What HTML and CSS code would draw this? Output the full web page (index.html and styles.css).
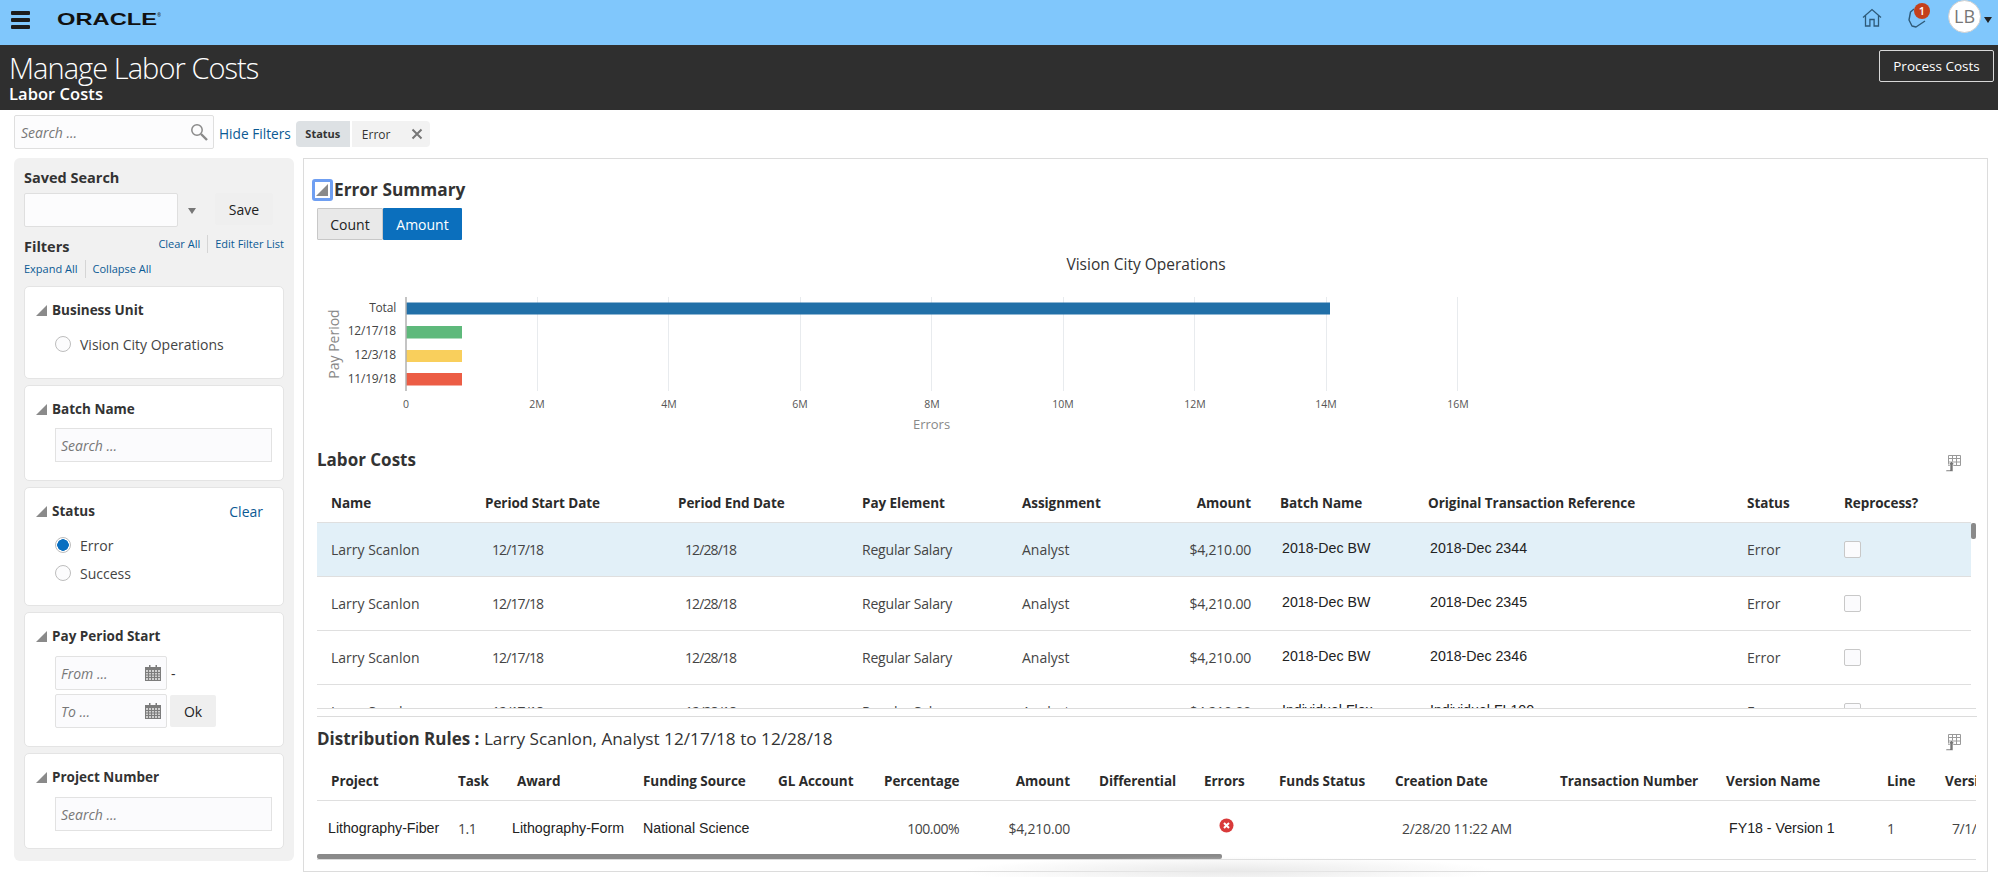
FILE: index.html
```html
<!DOCTYPE html>
<html lang="en">
<head>
<meta charset="utf-8">
<title>Manage Labor Costs</title>
<link rel="stylesheet" href="styles.css">
</head>
<body>
<header class="topbar">
  <div class="menu"><span></span><span></span><span></span></div>
  <svg class="logo" width="104" height="20" viewBox="0 0 104 20"><text x="0" y="15" textLength="100" lengthAdjust="spacingAndGlyphs" class="logo-text">ORACLE</text><text x="100" y="7" class="logo-r">®</text></svg>
  <div class="top-right">
    <svg class="home" width="20" height="19" viewBox="0 0 20 19"><path d="M1 9.500 10 1.500l9 8M3.500 7.600V18h4.400v-6.500h4.200V18h4.400V7.600" fill="none" stroke="#2e5a78" stroke-width="1.300"/></svg>
    <div class="notif">
      <svg width="22" height="24" viewBox="0 0 22 24"><path d="M8 3 4.500 6 3 14l3 6 4 1 9-6" fill="none" stroke="#2e5a78" stroke-width="1.400" stroke-linejoin="round"/></svg>
      <span class="badge">1</span>
    </div>
    <div class="avatar">LB</div>
    <span class="caret"></span>
  </div>
</header>
<section class="titlebar">
  <div>
    <h1>Manage Labor Costs</h1>
    <h2>Labor Costs</h2>
  </div>
  <button class="process">Process Costs</button>
</section>
<div class="filterbar">
  <div class="search">
    <span class="ph">Search ...</span>
    <svg width="18" height="18" viewBox="0 0 18 18"><circle cx="7" cy="7" r="5.200" fill="none" stroke="#8a8a8a" stroke-width="1.500"/><path d="M11 11l6 6" stroke="#8a8a8a" stroke-width="2.400"/></svg>
  </div>
  <a class="hide">Hide Filters</a>
  <div class="chip"><span class="chip-k">Status</span><span class="chip-v">Error<svg width="12" height="12" viewBox="0 0 12 12"><path d="M1.500 1.500l9 9m0-9l-9 9" stroke="#777" stroke-width="2"/></svg></span></div>
</div>
<main class="content">
  <aside class="side">
    <h3 class="side-h">Saved Search</h3>
    <div class="saved">
      <div class="saved-input"></div>
      <span class="drop"></span>
      <button class="btn save">Save</button>
    </div>
    <div class="filters-head">
      <h3 class="side-h">Filters</h3>
      <div class="links"><a>Clear All</a><a>Edit Filter List</a></div>
    </div>
    <div class="links links-left"><a>Expand All</a><a>Collapse All</a></div>

    <section class="card c1">
      <div class="card-h"><span class="tri"></span><h4>Business Unit</h4></div>
      <label class="radio-row"><span class="radio"></span>Vision City Operations</label>
    </section>
    <section class="card c2">
      <div class="card-h"><span class="tri"></span><h4>Batch Name</h4></div>
      <div class="field"><span class="ph">Search ...</span></div>
    </section>
    <section class="card c3">
      <div class="card-h"><span class="tri"></span><h4>Status</h4><a class="clear">Clear</a></div>
      <label class="radio-row"><span class="radio on"></span>Error</label>
      <label class="radio-row"><span class="radio"></span>Success</label>
    </section>
    <section class="card c4">
      <div class="card-h"><span class="tri"></span><h4>Pay Period Start</h4></div>
      <div class="date-row">
        <div class="date"><span class="ph">From ...</span><svg class="cal" width="16" height="16" viewBox="0 0 16 16"><use href="#cal"/></svg></div><span class="dash">-</span>
      </div>
      <div class="date-row">
        <div class="date"><span class="ph">To ...</span><svg class="cal" width="16" height="16" viewBox="0 0 16 16"><use href="#cal"/></svg></div><button class="btn ok">Ok</button>
      </div>
    </section>
    <section class="card c5">
      <div class="card-h"><span class="tri"></span><h4>Project Number</h4></div>
      <div class="field"><span class="ph">Search ...</span></div>
    </section>
  </aside>

  <div class="panel">
    <div class="summary-h"><span class="focus"><span class="tri"></span></span><h3>Error Summary</h3></div>
    <div class="toggle"><button class="t-count">Count</button><button class="t-amount">Amount</button></div>

    <svg class="chart" width="1200" height="179" viewBox="0 0 1200 179">
      <text class="c-title" x="830" y="33">Vision City Operations</text>
      <g class="grid">
        <path d="M221.500 60v94M352.500 60v94M484.500 60v94M615.500 60v94M747.500 60v94M878.500 60v94M1010.500 60v94M1141.500 60v94"/>
      </g>
      <rect x="90" y="65.500" width="924" height="12" fill="#2270a8"/>
      <rect x="90" y="89" width="56" height="12.500" fill="#5eb97b"/>
      <rect x="90" y="113" width="56" height="12" fill="#f9cf5c"/>
      <rect x="90" y="136" width="56" height="12.500" fill="#ec5d45"/>
      <path d="M90 60v94" stroke="#b0b0b0" stroke-width="1.500"/>
      <g class="c-y">
        <text x="80" y="75">Total</text>
        <text x="80" y="98">12/17/18</text>
        <text x="80" y="122">12/3/18</text>
        <text x="80" y="146">11/19/18</text>
      </g>
      <g class="c-x">
        <text x="90" y="171">0</text>
        <text x="221" y="171">2M</text>
        <text x="353" y="171">4M</text>
        <text x="484" y="171">6M</text>
        <text x="616" y="171">8M</text>
        <text x="747" y="171">10M</text>
        <text x="879" y="171">12M</text>
        <text x="1010" y="171">14M</text>
        <text x="1142" y="171">16M</text>
      </g>
      <text class="c-axis" transform="translate(23 107) rotate(-90)">Pay Period</text>
    </svg>
    <div class="c-errors">Errors</div>

    <div class="sec-h">
      <h3>Labor Costs</h3>
      <svg class="export" width="16" height="18" viewBox="0 0 16 18"><use href="#exp"/></svg>
    </div>
    <div class="clip">
      <table class="labor">
        <colgroup><col class="l0"><col class="l1"><col class="l2"><col class="l3"><col class="l4"><col class="l5"><col class="l6"><col class="l7"><col class="l8"><col class="l9"></colgroup>
        <thead><tr><th class="first">Name</th><th>Period Start Date</th><th>Period End Date</th><th>Pay Element</th><th>Assignment</th><th class="r">Amount</th><th class="after">Batch Name</th><th>Original Transaction Reference</th><th>Status</th><th>Reprocess?</th></tr></thead>
        <tbody>
          <tr class="sel"><td class="first">Larry Scanlon</td><td class="in dt">12/17/18</td><td class="in dt">12/28/18</td><td class="pe">Regular Salary</td><td>Analyst</td><td class="r amt">$4,210.00</td><td class="after ar b">2018-Dec BW</td><td class="ar bb">2018-Dec 2344</td><td>Error</td><td><span class="check"></span></td></tr>
          <tr><td class="first">Larry Scanlon</td><td class="in dt">12/17/18</td><td class="in dt">12/28/18</td><td class="pe">Regular Salary</td><td>Analyst</td><td class="r amt">$4,210.00</td><td class="after ar b">2018-Dec BW</td><td class="ar bb">2018-Dec 2345</td><td>Error</td><td><span class="check"></span></td></tr>
          <tr><td class="first">Larry Scanlon</td><td class="in dt">12/17/18</td><td class="in dt">12/28/18</td><td class="pe">Regular Salary</td><td>Analyst</td><td class="r amt">$4,210.00</td><td class="after ar b">2018-Dec BW</td><td class="ar bb">2018-Dec 2346</td><td>Error</td><td><span class="check"></span></td></tr>
          <tr><td class="first">Larry Scanlon</td><td class="in dt">12/17/18</td><td class="in dt">12/28/18</td><td class="pe">Regular Salary</td><td>Analyst</td><td class="r amt">$4,210.00</td><td class="after ar b">Individual Flex</td><td class="ar bb">Individual FL100</td><td>Error</td><td><span class="check"></span></td></tr>
        </tbody>
      </table>
      <span class="vthumb"></span>
    </div>

    <div class="sec-h dist">
      <h3>Distribution Rules : <span>Larry Scanlon, Analyst 12/17/18 to 12/28/18</span></h3>
      <svg class="export" width="16" height="18" viewBox="0 0 16 18"><use href="#exp"/></svg>
    </div>
    <div class="clip2">
      <table class="rules">
        <colgroup><col class="d0"><col class="d1"><col class="d2"><col class="d3"><col class="d4"><col class="d5"><col class="d6"><col class="d7"><col class="d8"><col class="d9"><col class="d10"><col class="d11"><col class="d12"><col class="d13"><col class="d14"></colgroup>
        <thead><tr><th class="first">Project</th><th>Task</th><th class="aw-h">Award</th><th>Funding Source</th><th>GL Account</th><th class="r">Percentage</th><th class="r">Amount</th><th class="after">Differential</th><th>Errors</th><th>Funds Status</th><th>Creation Date</th><th>Transaction Number</th><th>Version Name</th><th>Line</th><th>Version Date</th></tr></thead>
        <tbody><tr><td class="ar pr">Lithography-Fiber</td><td class="num">1.1</td><td class="ar">Lithography-Form</td><td class="ar">National Science</td><td></td><td class="r num">100.00%</td><td class="r amt">$4,210.00</td><td></td><td><svg class="err" width="15" height="15" viewBox="0 0 15 15"><circle cx="7.500" cy="7.500" r="7" fill="#d93a3a"/><path d="M5 5l5 5m0-5l-5 5" stroke="#fff" stroke-width="2"/></svg></td><td></td><td class="in cd">2/28/20 11:22 AM</td><td></td><td class="ar vn">FY18 - Version 1</td><td>1</td><td class="in num">7/1/18</td></tr></tbody>
      </table>
      <span class="hthumb"></span>
    </div>
  </div>
</main>
<div class="smudge"></div>
<svg class="defs" width="0" height="0">
  <symbol id="cal" viewBox="0 0 16 16"><path d="M4 0h1.500v2H4zM10.500 0H12v2h-1.500z" fill="#7c7c7c"/><path d="M0 2h16v14H0z" fill="#7c7c7c"/><path d="M1 5h14v10H1z" fill="#cfcfcf"/><path d="M1 7.500h14M1 10h14M1 12.500h14M3.500 5v10M6.500 5v10M9.500 5v10M12.500 5v10" stroke="#7c7c7c" stroke-width="1"/></symbol>
  <symbol id="exp" viewBox="0 0 16 18"><path d="M3.500 1.500h12v10h-12zM3.500 4.500h12M3.500 8h12M7.500 1.500v10M11.500 1.500v10" fill="none" stroke="#9a9a9a" stroke-width="1"/><path d="M1 16h4V10.500H3.500L6.500 7l3 3.500H8V17.500H1z" fill="#777" stroke="#fff" stroke-width=".6"/></symbol>
</svg>
</body>
</html>
```
FILE: styles.css
```css
* { box-sizing: border-box; }
html, body { margin: 0; padding: 0; }
body { width: 1998px; height: 877px; overflow: hidden; position: relative; background: #fff; font-family: "Open Sans", "Liberation Sans", sans-serif; font-size: 14px; color: #333; }
h1, h2, h3, h4 { margin: 0; }
a { color: #0b5a94; }
button { font-family: inherit; }

.topbar { height: 45px; background: #80c7fc; display: flex; align-items: flex-start; }
.menu { margin: 11px 0 0 11px; width: 19px; display: flex; flex-direction: column; gap: 3px; }
.menu span { height: 4px; background: #1c1c1c; border-radius: 1px; }
.logo { margin: 10px 0 0 27px; }
.logo-text { font-family: "Liberation Sans", sans-serif; font-size: 17px; font-weight: 700; fill: #111; }
.logo-r { font-size: 5px; fill: #111; }
.top-right { margin-left: auto; display: flex; align-items: flex-start; }
.home { margin: 8px 0 0 0; }
.notif { position: relative; width: 26px; height: 30px; margin: 6px 0 0 24px; }
.badge { position: absolute; left: 8px; top: -3px; width: 16px; height: 16px; border-radius: 50%; background: #c4401b; color: #fff; font-size: 11px; font-weight: 600; text-align: center; line-height: 16px; }
.avatar { width: 33px; height: 33px; margin: 0 0 0 16px; border-radius: 50%; background: #fff; border: 1px solid #d0d0d0; color: #777; font-size: 18px; text-align: center; line-height: 31px; }
.caret { margin: 17px 6px 0 3px; border: 4px solid transparent; border-top: 6px solid #222; border-bottom: 0; width: 0; height: 0; }

.titlebar { height: 65px; background: #2f2f2f; color: #fff; display: flex; justify-content: space-between; align-items: flex-start; padding: 5px 4px 0 9px; }
h1 { font-size: 29px; font-weight: 300; line-height: 35px; letter-spacing: -.95px; }
h2 { font-size: 16.500px; font-weight: 600; line-height: 18px; letter-spacing: .05px; }
.process { height: 32px; width: 115px; background: transparent; border: 1px solid #d8d8d8; border-radius: 2px; color: #fff; font-size: 13.500px; }

.filterbar { height: 48px; display: flex; align-items: flex-start; padding: 5px 0 0 14px; }
.search { width: 200px; height: 34px; background: #fcfcfd; border: 1px solid #dfdfdf; border-radius: 2px; display: flex; justify-content: space-between; align-items: center; padding: 0 5px 0 6px; }
.ph { font-style: italic; color: #777; font-size: 14px; }
.hide { margin: 9px 0 0 5px; font-size: 13.700px; line-height: 20px; }
.chip { margin: 6px 0 0 5px; height: 26px; display: flex; font-size: 12px; border-radius: 4px; overflow: hidden; }
.chip-k { width: 54px; background: #dde1e4; text-align: center; line-height: 26px; font-size: 11px; font-weight: 700; }
.chip-v { margin-left: 2px; width: 78px; background: #f2f2f2; padding: 0 7px 0 10px; display: flex; justify-content: space-between; align-items: center; }

.content { display: flex; align-items: flex-start; padding-left: 14px; }
.side { width: 280px; height: 703px; background: #f1f1f1; border-radius: 6px; padding: 10px 10px 0; flex: none; }
.side-h { font-size: 14.500px; font-weight: 700; line-height: 20px; }
.saved { display: flex; align-items: flex-start; margin-top: 5px; }
.saved-input { width: 154px; height: 34px; background: #fcfcfd; border: 1px solid #dfdfdf; border-radius: 2px; }
.drop { margin: 15px 0 0 10px; border: 4.500px solid transparent; border-top: 6px solid #777; border-bottom: 0; }
.btn { background: #efefef; border: 0; border-radius: 2px; color: #222; font-size: 14px; }
.save { margin-left: 19px; width: 58px; height: 32px; }
.filters-head { display: flex; justify-content: space-between; margin-top: 8px; height: 24px; align-items: flex-start; }
.filters-head .side-h { margin-top: 2px; }
.links { display: flex; font-size: 11px; line-height: 18px; }
.links a + a { border-left: 1px solid #d5d5d5; margin-left: 7px; padding-left: 7px; }
.links-left { margin-top: 1px; }
.card { background: #fff; border: 1px solid #e4e4e4; border-radius: 5px; margin-top: 6px; padding: 13px 10px 0 11px; }
.links-left + .card { margin-top: 8px; }
.c1 { height: 93px; }
.c2 { height: 96px; }
.c3 { height: 119px; }
.c4 { height: 135px; }
.c5 { height: 96px; }
.card-h { display: flex; align-items: center; height: 20px; }
.card-h h4 { font-size: 13.500px; font-weight: 700; margin-left: 5px; }
.tri { width: 0; height: 0; border-style: solid; border-width: 0 0 11px 11px; border-color: transparent transparent #8a8a8a transparent; }
.clear { margin-left: auto; padding-right: 10px; font-size: 14px; }
.radio-row { display: flex; align-items: center; gap: 9px; margin: 0 0 0 19px; font-size: 14px; color: #444; }
.c1 .radio-row { margin-top: 12px; height: 24px; }
.c3 .radio-row { margin-top: 13px; height: 22px; }
.c3 .radio-row + .radio-row { margin-top: 6px; }
.radio { width: 16px; height: 16px; border: 1px solid #bdbdbd; border-radius: 50%; background: #fcfcfd; }
.radio.on { background: radial-gradient(circle, #0a6fc0 0 5.500px, #fff 6px); }
.field { margin: 9px 0 0 19px; width: 217px; height: 34px; background: #fbfbfd; border: 1px solid #e2e2e2; padding: 0 5px; display: flex; align-items: center; }
.c5 .field { margin-top: 10px; }
.date-row { display: flex; align-items: center; margin: 0 0 0 19px; height: 34px; }
.date-row + .date-row { margin-top: 4px; }
.c4 .card-h + .date-row { margin-top: 10px; }
.date { width: 112px; height: 34px; background: #fbfbfd; border: 1px solid #e2e2e2; border-radius: 2px; padding: 0 5px; display: flex; justify-content: space-between; align-items: center; }
.dash { margin-left: 4px; }
.ok { margin-left: 3px; width: 46px; height: 32px; }

.panel { margin-left: 9px; width: 1685px; height: 714px; border: 1px solid #dcdcdc; padding: 0 10px 0 13px; flex: none; }
.summary-h { display: flex; align-items: center; margin: 19px 0 0 -5px; height: 23px; }
.summary-h h3 { font-size: 17.300px; font-weight: 700; margin-left: 1px; }
.focus { width: 21px; height: 22px; border: 3px solid #6f9ff2; border-radius: 3px; display: flex; align-items: flex-end; justify-content: flex-end; padding: 2px; }
.focus .tri { border-width: 0 0 12px 12px; }
.toggle { display: flex; margin-top: 7px; }
.toggle button { height: 32px; font-size: 14px; border-radius: 1px; }
.t-count { width: 66px; background: #e9e9e9; border: 1px solid #c8c8c8; color: #222; }
.t-amount { width: 79px; background: #0b6fbd; border: 0; color: #fff; }

.chart { display: block; margin: -3px 0 0 -1px; }
.grid path { stroke: #e8ebee; stroke-width: 1; }
.c-title { font-size: 15.500px; text-anchor: middle; fill: #333; }
.c-y text { font-size: 12px; text-anchor: end; fill: #444; letter-spacing: -.2px; }
.c-x text { font-size: 10.500px; text-anchor: middle; fill: #555; }
.c-axis { font-size: 14px; text-anchor: middle; fill: #888; }
.c-errors { width: 1229px; text-align: center; font-size: 13px; color: #888; line-height: 18px; margin-top: -1px; }

.sec-h { display: flex; justify-content: space-between; align-items: center; height: 22px; margin-top: 15px; padding-right: 16px; }
.sec-h h3 { font-size: 17px; font-weight: 700; }
.sec-h h3 span { font-weight: 400; font-size: 17.200px; }
.export { margin-top: 7px; }

.clip { position: relative; width: 1659px; height: 221px; margin-top: 18px; overflow: hidden; border-bottom: 1px solid #dcdcdc; }
table { border-collapse: collapse; table-layout: fixed; }
.labor { width: 1654px; }
th { text-align: left; font-size: 13.500px; font-weight: 700; white-space: nowrap; padding: 0; color: #2b2b2b; border-bottom: 1px solid #dfdfdf; letter-spacing: -.06px; }
td { padding: 0; font-size: 14px; white-space: nowrap; color: #444; border-bottom: 1px solid #dfdfdf; }
.labor th { height: 34px; vertical-align: top; padding-top: 6px; }
.labor td { height: 54px; }
.sel td { background: #e2f0f8; }
.first { padding-left: 14px; }
.in { padding-left: 7px; }
.num { letter-spacing: -.5px; }
.dt { letter-spacing: -.9px; }
.amt { letter-spacing: -.2px; }
.cd { letter-spacing: -.3px; }
.pe { letter-spacing: -.2px; }
.r { text-align: right; }
.after { padding-left: 29px; }
.labor td.after { padding-left: 31px; }
.ar { font-family: "Liberation Sans", sans-serif; font-size: 14.200px; color: #222; }
.labor .ar { padding-bottom: 3px; }
.bb { padding-left: 2px; }
.check { display: block; width: 17px; height: 17px; border: 1px solid #c8c8c8; border-radius: 2px; background: #fbfbfd; }
.l0 { width: 168px; } .l1 { width: 193px; } .l2 { width: 184px; } .l3 { width: 160px; } .l4 { width: 158px; } .l5 { width: 71px; } .l6 { width: 177px; } .l7 { width: 319px; } .l8 { width: 97px; } .l9 { width: 127px; }
.vthumb { position: absolute; right: 0; top: 35px; width: 5px; height: 16px; background: #8a8a8a; border-radius: 2px; }

.sec-h.dist { margin-top: 7px; height: 33px; padding-top: 10px; border-top: 1px solid #dcdcdc; }
.dist .export { margin-top: 7px; }
.clip2 { position: relative; width: 1659px; height: 102px; overflow: hidden; margin-top: 9px; border-bottom: 1px solid #dcdcdc; }
.rules { width: 1728px; }
.rules th { height: 42px; padding-top: 4px; }
.rules td { height: 58px; border-bottom: 0; padding-bottom: 2px; }
.d0 { width: 141px; } .d1 { width: 54px; } .d2 { width: 131px; } .d3 { width: 135px; } .d4 { width: 106px; } .d5 { width: 75px; } .d6 { width: 111px; } .d7 { width: 134px; } .d8 { width: 75px; } .d9 { width: 116px; } .d10 { width: 165px; } .d11 { width: 166px; } .d12 { width: 161px; } .d13 { width: 58px; } .d14 { width: 100px; }
.rules td.pr { padding-left: 11px; }
.rules .aw-h { padding-left: 5px; }
.err { display: block; margin: -6px 0 0 15px; }
.vn { padding-left: 3px; }
.hthumb { position: absolute; left: 0; bottom: 0; width: 905px; height: 5px; background: #8a8a8a; border-radius: 2px; }
.smudge { position: absolute; left: 960px; top: 856px; width: 540px; height: 30px; background: radial-gradient(ellipse at center, #e9e9e9, rgba(240,240,240,0) 70%); pointer-events: none; }
.defs { position: absolute; }
```
